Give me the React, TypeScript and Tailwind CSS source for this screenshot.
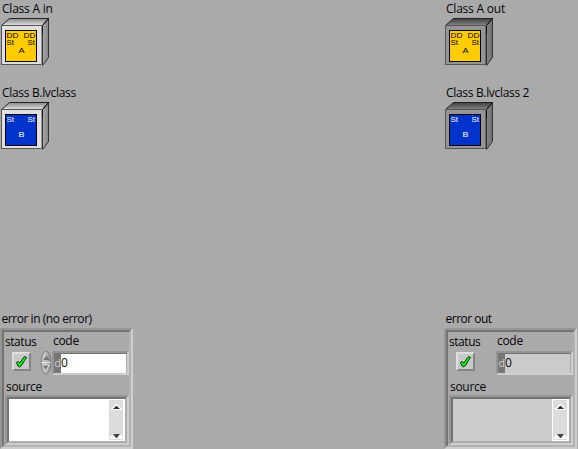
import React from 'react';

const label = "block whitespace-pre font-['Open_Sans',sans-serif] text-[12px] leading-[16px] text-[#050508]";

function Cube({ kind, out }: { kind: 'A' | 'B'; out?: boolean }) {
  const isA = kind === 'A';
  const id = `${kind}${out ? 'out' : 'in'}`;
  const ink = isA ? '#000' : '#fff';
  return (
    <svg width="50" height="50" viewBox="0 0 50 50" className="block" fontFamily="'Liberation Sans', sans-serif">
      <defs>
        <linearGradient id={`top${id}`} x1="0" x2="0" y1="0" y2="1">
          <stop offset="0" stopColor={out ? '#3c403e' : '#858585'} />
          <stop offset="1" stopColor={out ? '#858585' : '#e2e2e2'} />
        </linearGradient>
        <linearGradient id={`side${id}`} x1="0" x2="1" y1="0" y2="0">
          <stop offset="0" stopColor={out ? '#858585' : '#aaa'} />
          <stop offset="1" stopColor={out ? '#707070' : '#858585'} />
        </linearGradient>
      </defs>
      <path d="M1.5 8.5 L9.5 1.5 H48.5 L42.5 8.5Z" fill={`url(#top${id})`} stroke="#222" />
      <path d="M42.5 8.5 L48.5 1.5 V40.5 L42.5 48.5Z" fill={`url(#side${id})`} stroke="#333" />
      <rect x="1.5" y="8.5" width="40" height="39" fill={out ? '#959595' : '#e0e0e0'} stroke="#555" />
      <path d="M41.5 9V48" stroke={out ? '#666' : '#999'} />
      <path d="M42.5 9V17M43 8L49 1" stroke="#111" />
      <rect x="5.5" y="13.5" width="31" height="31" fill={isA ? '#ffcc00' : '#0033cc'} stroke="#000" />
      {isA && (
        <g fontSize="7" fill="#000">
          <text x="6.5" y="20.6" textLength="12" lengthAdjust="spacingAndGlyphs">DD</text>
          <text x="23.5" y="20.6" textLength="12" lengthAdjust="spacingAndGlyphs">DD</text>
        </g>
      )}
      <g fontSize="7" fill={ink}>
        <text x="6.5" y={isA ? 28.4 : 21} textLength="7.5" lengthAdjust="spacingAndGlyphs">St</text>
        <text x="27.5" y={isA ? 28.4 : 21} textLength="7.5" lengthAdjust="spacingAndGlyphs">St</text>
        <text x="18.5" y="35.8" textLength="6" lengthAdjust="spacingAndGlyphs">{kind}</text>
      </g>
    </svg>
  );
}

function ClassTerminal({ name, kind, out }: { name: string; kind: 'A' | 'B'; out?: boolean }) {
  return (
    <div className="h-[84px] pt-px">
      <span className={`${label} ${kind === 'A' ? 'tracking-[-0.22px]' : 'tracking-[-0.32px]'} pl-[2px]`}>{name}</span>
      <Cube kind={kind} out={out} />
    </div>
  );
}

const sunken = 'border-2 border-t-[#959595] border-l-[#959595] border-r-[#cecece] border-b-[#cecece]';
const inner = 'border-2 border-t-[#737373] border-l-[#737373] border-r-[#adadad] border-b-[#adadad]';

function Check() {
  return (
    <div className="flex h-[19px] w-[19px] items-center justify-center border-2 border-t-[#dedede] border-l-[#dedede] border-r-[#858585] border-b-[#858585] bg-[#c8c8c8]">
      <svg width="13" height="13" viewBox="0 0 13 13" className="block shrink-0">
        <path d="M1.5 7.5 L3 6.5 L5 8 L8.5 2.5 L10 1.5 L11.5 2.5 L9.5 5.5 L6.5 10.5 L4.5 12 L3 11Z" fill="#00ff00" stroke="#000" strokeWidth="0.8" />
      </svg>
    </div>
  );
}

function Spinner() {
  return (
    <svg width="12" height="26" viewBox="0 0 12 26" className="block">
      <defs>
        <linearGradient id="spin" x1="0" x2="1">
          <stop offset="0" stopColor="#b0b0b0" />
          <stop offset="0.4" stopColor="#c8c8c8" />
          <stop offset="1" stopColor="#858585" />
        </linearGradient>
      </defs>
      <ellipse cx="6" cy="12.5" rx="5" ry="11.5" fill="url(#spin)" stroke="#808080" />
      <path d="M1 12.5H11" stroke="#e2e2e2" />
      <path d="M2.5 10L6 5L9.5 10Z M2.5 15L6 20L9.5 15Z" fill="#777" />
      <path d="M2.5 10L6 5M2.5 15H9.5L6 20" fill="none" stroke="#eee" strokeWidth="0.9" />
    </svg>
  );
}

function ScrollBar() {
  return (
    <div className="flex h-full w-[17px] flex-col items-center justify-between border border-r-2 border-white bg-[#dcdcdc] pt-[4px] pb-px">
      <svg width="11" height="6" viewBox="0 0 11 6" className="block">
        <path d="M0 6V5L5 0H6L11 5V6Z" fill="#fff" />
        <path d="M2 5L5 2H6L9 5Z" fill="#333" />
      </svg>
      <svg width="13" height="6" viewBox="0 0 13 6" className="block">
        <path d="M0 6V4L3 1H10L13 4V6Z" fill="#fff" />
        <path d="M3 1H10L7 5H6Z" fill="#444" />
      </svg>
    </div>
  );
}

function ErrorCluster({ name, out }: { name: string; out?: boolean }) {
  const bg = out ? 'bg-[#cbcbcb]' : 'bg-white';
  return (
    <div>
      <span className={`${label} ${out ? 'tracking-[-0.5px]' : 'tracking-[-0.45px]'} pl-[1.5px]`}>{name}</span>
      <div className={`mt-px h-[121px] w-[133px] ${sunken}`}>
        <div className="h-full w-full border-2 border-t-[#737373] border-l-[#737373] border-r-[#b2b2b2] border-b-[#b2b2b2]">
          <div className="flex h-[47px]">
            <div className="w-[36px] pt-[2px]">
              <span className={`${label} ml-px tracking-[-0.45px]`}>status</span>
              <div className="pt-[2px] pl-[8px]"><Check /></div>
            </div>
            <div className="flex w-[12px] items-end pb-[3px]">{!out && <Spinner />}</div>
            <div className="pt-px">
              <span className={`${label} pl-px tracking-[-0.3px]`}>code</span>
              <div className={`mt-[2px] h-[24px] w-[77px] ${sunken}`}>
                <div className={`flex h-full w-full overflow-hidden border-t border-[#737373] ${bg}`}>
                  <span className="h-full w-[7px] bg-[#777] text-center font-['Open_Sans',sans-serif] text-[11px] leading-[18px] text-[#ccc]">d</span>
                  <span className={`${label} leading-[18px]`}>0</span>
                  <span className="ml-auto w-px bg-[#adadad]" />
                </div>
              </div>
            </div>
          </div>
          <span className={`${label} ml-[2px] tracking-[-0.3px]`}>source</span>
          <div className={`ml-px h-[50px] w-[124px] ${sunken}`}>
            <div className={`flex h-full w-full justify-end ${inner} ${bg}`}>
              <ScrollBar />
            </div>
          </div>
        </div>
      </div>
    </div>
  );
}

function Column({ out }: { out?: boolean }) {
  return (
    <div className="w-[134px]">
      <ClassTerminal name={out ? 'Class A out' : 'Class A in'} kind="A" out={out} />
      <ClassTerminal name={out ? 'Class B.lvclass 2' : 'Class B.lvclass'} kind="B" out={out} />
      <div className="pt-[143px]">
        <ErrorCluster name={out ? 'error out' : 'error in (no error)'} out={out} />
      </div>
    </div>
  );
}

export default function App() {
  return (
    <main className="flex h-[449px] w-[578px] justify-between overflow-hidden bg-[#aaaaaa]">
      <Column />
      <Column out />
    </main>
  );
}
